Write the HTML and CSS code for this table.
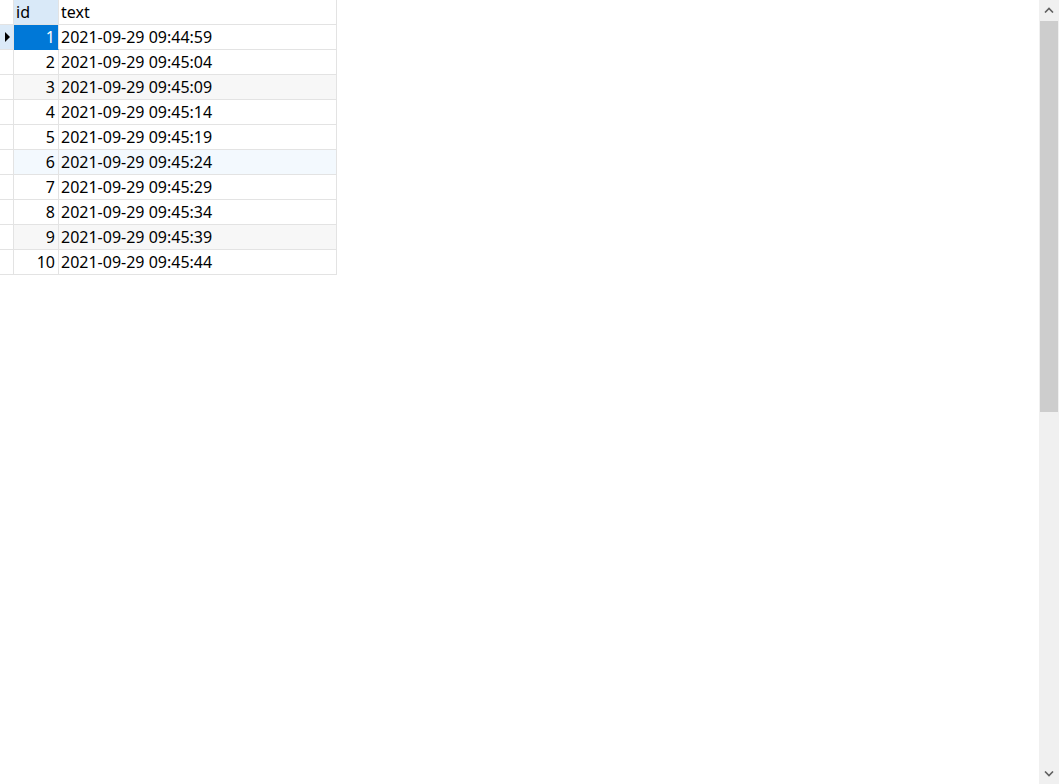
FILE: index.html
```html
<!DOCTYPE html>
<html>
<head>
<meta charset="utf-8">
<link rel="stylesheet" href="styles.css">
</head>
<body>
<div class="app">
  <div class="grid">
    <div class="row head">
      <div class="ind"></div>
      <div class="c-id hl">id</div>
      <div class="c-text">text</div>
    </div>
    <div class="row">
      <div class="ind cur"><span class="tri"></span></div>
      <div class="c-id sel">1</div>
      <div class="c-text">2021-09-29 09:44:59</div>
    </div>
    <div class="row"><div class="ind"></div><div class="c-id">2</div><div class="c-text">2021-09-29 09:45:04</div></div>
    <div class="row alt"><div class="ind"></div><div class="c-id">3</div><div class="c-text">2021-09-29 09:45:09</div></div>
    <div class="row"><div class="ind"></div><div class="c-id">4</div><div class="c-text">2021-09-29 09:45:14</div></div>
    <div class="row"><div class="ind"></div><div class="c-id">5</div><div class="c-text">2021-09-29 09:45:19</div></div>
    <div class="row hov"><div class="ind"></div><div class="c-id">6</div><div class="c-text">2021-09-29 09:45:24</div></div>
    <div class="row"><div class="ind"></div><div class="c-id">7</div><div class="c-text">2021-09-29 09:45:29</div></div>
    <div class="row"><div class="ind"></div><div class="c-id">8</div><div class="c-text">2021-09-29 09:45:34</div></div>
    <div class="row alt"><div class="ind"></div><div class="c-id">9</div><div class="c-text">2021-09-29 09:45:39</div></div>
    <div class="row"><div class="ind"></div><div class="c-id">10</div><div class="c-text">2021-09-29 09:45:44</div></div>
  </div>
  <div class="scrollbar">
    <div class="arrow">
      <svg width="10" height="6" viewBox="0 0 10 6"><path d="M1 5.5 L5 1.5 L9 5.5" fill="none" stroke="#606060" stroke-width="1.6"/></svg>
    </div>
    <div class="track">
      <div class="thumb"></div>
    </div>
    <div class="arrow">
      <svg width="10" height="6" viewBox="0 0 10 6"><path d="M1 0.5 L5 4.5 L9 0.5" fill="none" stroke="#606060" stroke-width="1.6"/></svg>
    </div>
  </div>
</div>
</body>
</html>
```
FILE: styles.css
```css
html, body {
  margin: 0;
  padding: 0;
  background: #fff;
}
.app {
  display: flex;
  width: 1059px;
  height: 784px;
  overflow: hidden;
  font-family: "Noto Sans", "Segoe UI", sans-serif;
  font-size: 16px;
  color: #000;
}
.grid {
  flex: 1;
  display: flex;
  flex-direction: column;
  align-items: flex-start;
}
.row {
  display: flex;
  height: 25px;
  box-sizing: border-box;
}
.ind {
  width: 14px;
  box-sizing: border-box;
  border-right: 1px solid #e3e3e3;
  border-bottom: 1px solid #e3e3e3;
  display: flex;
  align-items: center;
  justify-content: flex-start;
}
.ind.cur {
  background: #dbeaf8;
}
.tri {
  width: 0;
  height: 0;
  margin-left: 5px;
  border-top: 5px solid transparent;
  border-bottom: 5px solid transparent;
  border-left: 5px solid #000;
}
.c-id {
  width: 45px;
  box-sizing: border-box;
  border-right: 1px solid #e3e3e3;
  border-bottom: 1px solid #e3e3e3;
  text-align: right;
  padding-right: 3px;
  line-height: 25px;
}
.head .c-id {
  text-align: left;
  padding-left: 2px;
}
.c-id.hl {
  background: #d9e9f8;
}
.c-id.sel {
  background: #0078d7;
  color: #fff;
  border-bottom-color: #0078d7;
}
.c-text {
  width: 278px;
  box-sizing: border-box;
  border-right: 1px solid #e3e3e3;
  border-bottom: 1px solid #e3e3e3;
  padding-left: 2px;
  line-height: 25px;
}
.row.alt .c-id, .row.alt .c-text {
  background: #f7f7f7;
}
.row.hov .c-id, .row.hov .c-text {
  background: #f3f9fe;
}
.scrollbar {
  width: 20px;
  background: #f0f0f0;
  display: flex;
  flex-direction: column;
}
.arrow {
  height: 20px;
  display: flex;
  align-items: center;
  justify-content: center;
}
.track {
  flex: 1;
}
.thumb {
  height: 391px;
  margin: 1px 1px 0 1px;
  background: #cdcdcd;
}
```
